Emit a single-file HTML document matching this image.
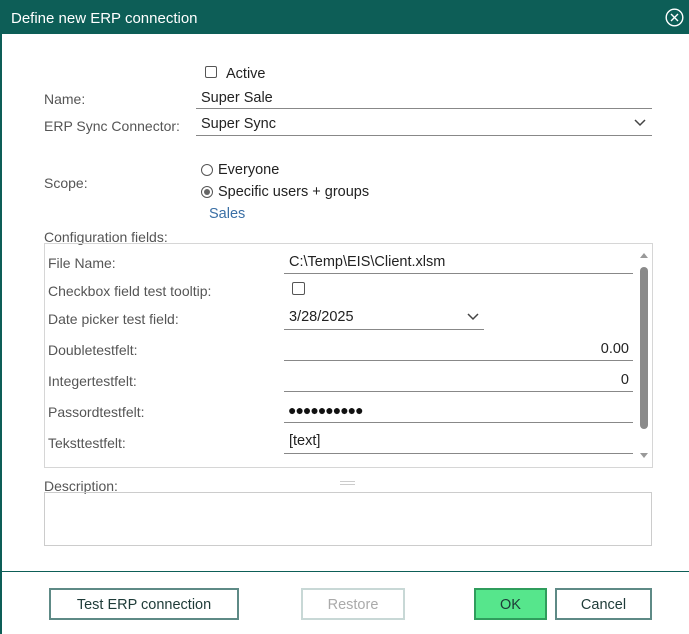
<!DOCTYPE html>
<html><head><style>
*{margin:0;padding:0;box-sizing:border-box}
body{width:689px;height:634px;background:#fff;font-family:"Liberation Sans",sans-serif;position:relative;overflow:hidden;color:#222}
.a{position:absolute;white-space:nowrap}
.lbl{color:#555;font-size:14px}
.val{color:#222;font-size:14.5px}
.line{position:absolute;height:1px;background:#888}
.btn{position:absolute;top:588px;height:32px;border:2px solid #5e8a86;background:#fff;font-size:14.5px;color:#1e3b38;text-align:center;line-height:31px}
</style></head><body>
<div class="a" style="left:0;top:0;width:689px;height:34px;background:#0d5e57"></div>
<div class="a" style="left:11px;top:10px;color:#fff;font-size:15px">Define new ERP connection</div>
<svg class="a" style="left:665px;top:8px" width="19" height="19" viewBox="0 0 19 19"><circle cx="9.5" cy="9.5" r="8.3" fill="none" stroke="#fff" stroke-width="1.4"/><path d="M6 6L13 13M13 6L6 13" stroke="#fff" stroke-width="1.4"/></svg>
<div class="a" style="left:0;top:34px;width:2px;height:600px;background:#0d5e57"></div>

<div class="a" style="left:205px;top:66px;width:12px;height:12px;border:1px solid #555;border-radius:2px"></div>
<div class="a val" style="left:226px;top:66px">Active</div>

<div class="a lbl" style="left:44px;top:91px">Name:</div>
<div class="a val" style="left:201px;top:90px">Super Sale</div>
<div class="line" style="left:196px;top:108px;width:456px"></div>

<div class="a lbl" style="left:44px;top:118px">ERP Sync Connector:</div>
<div class="a val" style="left:201px;top:116px">Super Sync</div>
<svg class="a" style="left:634px;top:119px" width="12" height="8"><path d="M1 1L6 6L11 1" fill="none" stroke="#444" stroke-width="1.5"/></svg>
<div class="line" style="left:196px;top:135px;width:456px"></div>

<div class="a lbl" style="left:44px;top:175px">Scope:</div>
<div class="a" style="left:201px;top:164px;width:12px;height:12px;border:1px solid #555;border-radius:50%"></div>
<div class="a val" style="left:218px;top:162px">Everyone</div>
<div class="a" style="left:201px;top:186px;width:12px;height:12px;border:1px solid #555;border-radius:50%"><div style="margin:2px;width:6px;height:6px;border-radius:50%;background:#666"></div></div>
<div class="a val" style="left:218px;top:184px">Specific users + groups</div>
<div class="a" style="left:209px;top:206px;color:#3a6fa5;font-size:14.5px">Sales</div>

<div class="a lbl" style="left:44px;top:229px">Configuration fields:</div>
<div class="a" style="left:44px;top:243px;width:609px;height:225px;border:1px solid #d6d6d6"></div>
<div class="a" style="left:640px;top:267px;width:8px;height:162px;background:#8a8a8a;border-radius:4px"></div>
<svg class="a" style="left:639px;top:251px" width="10" height="8"><path d="M1 7L5 2L9 7Z" fill="#999"/></svg>
<svg class="a" style="left:639px;top:452px" width="10" height="8"><path d="M1 1L5 6L9 1Z" fill="#999"/></svg>

<div class="a lbl" style="left:48px;top:255px">File Name:</div>
<div class="a val" style="left:289px;top:254px">C:\Temp\EIS\Client.xlsm</div>
<div class="line" style="left:284px;top:273px;width:349px"></div>
<div class="a lbl" style="left:48px;top:283px">Checkbox field test tooltip:</div>
<div class="a" style="left:292px;top:282px;width:13px;height:13px;border:1px solid #555;border-radius:2px"></div>
<div class="a lbl" style="left:48px;top:311px">Date picker test field:</div>
<div class="a val" style="left:289px;top:309px">3/28/2025</div>
<svg class="a" style="left:467px;top:313px" width="12" height="8"><path d="M1 1L6 6L11 1" fill="none" stroke="#444" stroke-width="1.5"/></svg>
<div class="line" style="left:284px;top:329px;width:200px"></div>
<div class="a lbl" style="left:48px;top:342px">Doubletestfelt:</div>
<div class="a val" style="left:560px;top:341px;width:69px;text-align:right">0.00</div>
<div class="line" style="left:284px;top:360px;width:349px"></div>
<div class="a lbl" style="left:48px;top:373px">Integertestfelt:</div>
<div class="a val" style="left:560px;top:372px;width:69px;text-align:right">0</div>
<div class="line" style="left:284px;top:391px;width:349px"></div>
<div class="a lbl" style="left:48px;top:404px">Passordtestfelt:</div>
<div class="a" style="left:288px;top:402px;font-size:14px;color:#111;letter-spacing:-1px">●●●●●●●●●●</div>
<div class="line" style="left:284px;top:422px;width:349px"></div>
<div class="a lbl" style="left:48px;top:435px">Teksttestfelt:</div>
<div class="a val" style="left:289px;top:433px">[text]</div>
<div class="line" style="left:284px;top:453px;width:349px"></div>

<div class="a lbl" style="left:44px;top:478px">Description:</div>
<div class="a" style="left:340px;top:481px;width:15px;height:4px;border-top:1px solid #ccc;border-bottom:1px solid #ccc"></div>
<div class="a" style="left:44px;top:492px;width:608px;height:54px;border:1px solid #ccc"></div>

<div class="a" style="left:2px;top:571px;width:687px;height:1px;background:#0d5e57"></div>
<div class="btn" style="left:49px;width:190px">Test ERP connection</div>
<div class="btn" style="left:301px;width:104px;border-color:#c8d8d6;color:#aaa">Restore</div>
<div class="btn" style="left:474px;width:73px;background:#56e68c;border-color:#2f9d5c">OK</div>
<div class="btn" style="left:555px;width:97px">Cancel</div>
</body></html>
